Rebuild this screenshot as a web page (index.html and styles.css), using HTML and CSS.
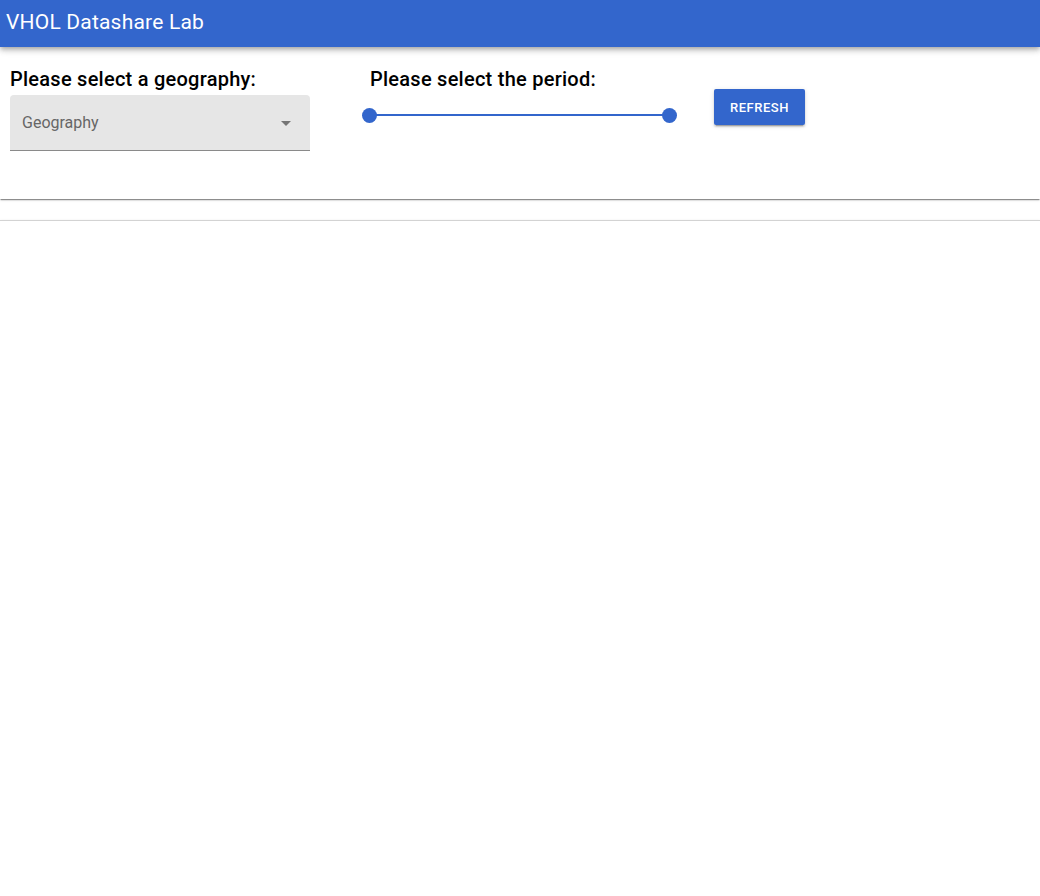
FILE: index.html
```html
<!DOCTYPE html>
<html>
<head>
<meta charset="utf-8">
<link rel="stylesheet" href="styles.css">
</head>
<body>
<header class="appbar">VHOL Datashare Lab</header>
<section class="card controls">
  <div class="col geo">
    <div class="label">Please select a geography:</div>
    <div class="select">
      <span class="placeholder">Geography</span>
      <svg class="arrow" width="10" height="5" viewBox="0 0 10 5"><path d="M0 0 L10 0 L5 5 Z" fill="#757575"/></svg>
    </div>
  </div>
  <div class="col period">
    <div class="label">Please select the period:</div>
    <div class="slider">
      <div class="track"></div>
      <div class="thumb left"></div>
      <div class="thumb right"></div>
    </div>
  </div>
  <div class="col action">
    <button class="btn">REFRESH</button>
  </div>
</section>
<section class="card chart"></section>
</body>
</html>
```

FILE: styles.css
```css
html, body {
  margin: 0;
  padding: 0;
  background: #fff;
  font-family: Roboto, "Liberation Sans", sans-serif;
}
.appbar {
  position: relative;
  z-index: 2;
  height: 47px;
  box-sizing: border-box;
  background: #3366cc;
  color: #fff;
  font-size: 21px;
  letter-spacing: 0.2px;
  line-height: 44px;
  padding-left: 6px;
  box-shadow: 0 2px 4px -1px rgba(0,0,0,0.2), 0 4px 5px 0 rgba(0,0,0,0.14), 0 1px 10px 0 rgba(0,0,0,0.12);
}
.card {
  background: #fff;
}
.controls {
  display: flex;
  align-items: flex-start;
  padding: 20px 10px 0 10px;
  height: 152px;
  box-sizing: border-box;
  box-shadow: 0 2px 1px -1px rgba(0,0,0,0.3), 0 1px 1px 0 rgba(0,0,0,0.14), 0 1px 3px 0 rgba(0,0,0,0.12);
}
.col { display: flex; flex-direction: column; }
.geo { width: 300px; }
.label {
  font-size: 20px;
  font-weight: 500;
  line-height: 24px;
  color: #000;
  letter-spacing: 0.25px;
}
.select {
  margin-top: 4px;
  height: 56px;
  box-sizing: border-box;
  background: #e6e6e6;
  border-radius: 4px 4px 0 0;
  border-bottom: 1px solid #8a8a8a;
  display: flex;
  align-items: center;
  justify-content: space-between;
  padding: 0 19px 0 12px;
}
.placeholder {
  font-size: 16px;
  color: #666;
  margin-top: 0;
}
.arrow { margin-top: 1px; }
.period {
  margin-left: 60px;
  width: 300px;
}
.slider {
  position: relative;
  height: 15px;
  margin-top: 17px;
}
.track {
  position: absolute;
  left: 0;
  right: 0;
  top: 6px;
  height: 2px;
  background: #3366cc;
}
.thumb {
  position: absolute;
  top: 0;
  width: 15px;
  height: 15px;
  border-radius: 50%;
  background: #3366cc;
}
.thumb.left { left: -8px; }
.thumb.right { right: -7px; }
.action {
  margin-left: 44px;
}
.btn {
  margin-top: 22px;
  width: 91px;
  height: 36px;
  background: #3366cc;
  color: #fff;
  border: none;
  border-radius: 2px;
  font-family: Roboto, "Liberation Sans", sans-serif;
  font-size: 13px;
  font-weight: 500;
  letter-spacing: 0.5px;
  box-shadow: 0 3px 1px -2px rgba(0,0,0,0.2), 0 2px 2px 0 rgba(0,0,0,0.14), 0 1px 5px 0 rgba(0,0,0,0.12);
  padding: 0;
}
.chart {
  margin-top: 21px;
  height: 401px;
  border-top: 1px solid #d3d3d3;
  box-sizing: border-box;
  box-shadow: 0 2px 1px -1px rgba(0,0,0,0.3), 0 1px 1px 0 rgba(0,0,0,0.14), 0 1px 3px 0 rgba(0,0,0,0.12);
}
```
